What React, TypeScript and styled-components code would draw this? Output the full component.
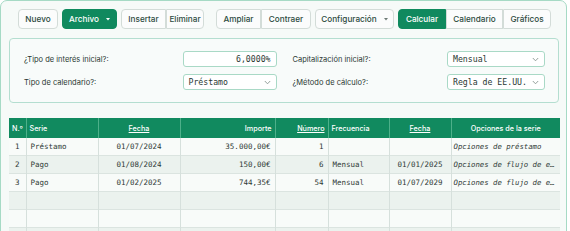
import React from "react";
import styled, { createGlobalStyle } from "styled-components";

const GlobalStyle = createGlobalStyle`
  html, body {
    margin: 0;
    padding: 0;
    background: #ffffff;
  }
  body {
    font-family: Inter, "Liberation Sans", sans-serif;
    color: #26352f;
  }
`;

const Panel = styled.div`
  width: 567px;
  height: 240px;
  box-sizing: border-box;
  border: 1px solid #a6dac5;
  border-radius: 7px;
  background: #f6faf8;
  padding: 8px 7px 0 8px;
  overflow: hidden;
`;

const Toolbar = styled.div`
  display: flex;
  align-items: center;
  gap: 4px;
  padding-left: 9px;
  height: 20px;
`;

const Group = styled.div<{ $after?: number }>`
  display: flex;
  margin-right: ${(p) => p.$after ?? 0}px;
`;

const Button = styled.button<{ $primary?: boolean; $w: number }>`
  height: 20px;
  width: ${(p) => p.$w}px;
  padding: 0;
  box-sizing: border-box;
  font-family: Inter, "Liberation Sans", sans-serif;
  font-size: 8.2px;
  font-weight: 500;
  border: 1px solid ${(p) => (p.$primary ? "#0f8a5e" : "#d3dcd8")};
  background: ${(p) => (p.$primary ? "#10895e" : "#fbfcfc")};
  color: ${(p) => (p.$primary ? "#ffffff" : "#2c4a3e")};
  border-radius: 4px;
  display: flex;
  align-items: center;
  justify-content: center;
  gap: 7px;

  ${Group} > & {
    border-radius: 0;
  }
  ${Group} > &:first-child {
    border-radius: 4px 0 0 4px;
  }
  ${Group} > &:last-child {
    border-radius: 0 4px 4px 0;
  }
  ${Group} > & + & {
    border-left-width: 0;
  }
`;

const Caret = ({ color }: { color: string }) => (
  <svg width="4" height="3" viewBox="0 0 4 3">
    <path d="M0 0 H4 L2 2.4 Z" fill={color} />
  </svg>
);

const Settings = styled.div`
  margin: 9px 0 0 0;
  border: 1px solid #b4ded0;
  border-radius: 4px;
  background: #f8fbfa;
  padding: 12px 13px 12px 14px;
  display: grid;
  grid-template-columns: 1fr 1fr;
  column-gap: 16px;
  row-gap: 7px;
`;

const Field = styled.div`
  display: flex;
  align-items: center;
  justify-content: space-between;
  height: 16px;
`;

const Label = styled.span`
  font-size: 7.5px;
  color: #2a3832;
`;

const Control = styled.div<{ $w: number; $align?: string }>`
  width: ${(p) => p.$w}px;
  height: 16px;
  box-sizing: border-box;
  border: 1px solid #a9d9c6;
  border-radius: 3px;
  background: #ffffff;
  display: flex;
  align-items: center;
  justify-content: ${(p) => (p.$align === "right" ? "flex-end" : "space-between")};
  padding: 0 5px 0 5px;
  font-family: "DejaVu Sans Mono", "Liberation Mono", monospace;
  font-size: 8.2px;
  color: #2a3832;
`;

const Chevron = () => (
  <svg width="7" height="5" viewBox="0 0 7 5" fill="none">
    <path d="M0.8 1 L3.5 3.8 L6.2 1" stroke="#8a9691" strokeWidth="0.9" />
  </svg>
);

const Table = styled.table`
  margin-top: 15px;
  width: 551px;
  border-collapse: collapse;
  table-layout: fixed;
`;

const Th = styled.th<{ $align?: string; $link?: boolean }>`
  height: 20px;
  padding: 0 3px;
  background: #118a5f;
  color: #ffffff;
  font-size: 7.2px;
  font-weight: 500;
  text-align: ${(p) => p.$align ?? "left"};
  text-decoration: ${(p) => (p.$link ? "underline" : "none")};
  border-left: 1px solid #4db08a;
  white-space: nowrap;
  &:first-child {
    border-left: none;
  }
`;

const Row = styled.tr<{ $even: boolean }>`
  background: ${(p) => (p.$even ? "#ebf2ee" : "#f8fbf9")};
  border-bottom: 1px solid #dbe4e0;
`;

const Td = styled.td<{ $align?: string; $italic?: boolean }>`
  height: 17px;
  padding: 0 ${(p) => (p.$italic ? 2 : 4)}px;
  font-family: "DejaVu Sans Mono", "Liberation Mono", monospace;
  font-size: ${(p) => (p.$italic ? 7.3 : 7.5)}px;
  color: #2f3a36;
  text-align: ${(p) => p.$align ?? "left"};
  font-style: ${(p) => (p.$italic ? "italic" : "normal")};
  border-left: 1px solid #d6e0dc;
  white-space: nowrap;
  overflow: hidden;
  text-overflow: ellipsis;
  &:first-child {
    border-left: none;
  }
`;

const cols = [17, 72, 82, 95, 53, 61, 62, 109];

const rows = [
  ["1", "Préstamo", "01/07/2024", "35.000,00€", "1", "", "", "Opciones de préstamo"],
  ["2", "Pago", "01/08/2024", "150,00€", "6", "Mensual", "01/01/2025", "Opciones de flujo de efectivo"],
  ["3", "Pago", "01/02/2025", "744,35€", "54", "Mensual", "01/07/2029", "Opciones de flujo de efectivo"],
  ["", "", "", "", "", "", "", ""],
  ["", "", "", "", "", "", "", ""],
  ["", "", "", "", "", "", "", ""],
];

const aligns = ["center", "left", "center", "right", "right", "left", "center", "left"];

export default function App() {
  return (
    <>
      <GlobalStyle />
      <Panel>
        <Toolbar>
          <Button $w={40}>Nuevo</Button>
          <Button $primary $w={55}>
            Archivo <Caret color="#ffffff" />
          </Button>
          <Group $after={8}>
            <Button $w={45}>Insertar</Button>
            <Button $w={38}>Eliminar</Button>
          </Group>
          <Group>
            <Button $w={45}>Ampliar</Button>
            <Button $w={50}>Contraer</Button>
          </Group>
          <Button $w={79}>
            Configuración <Caret color="#6d7a75" />
          </Button>
          <Group>
            <Button $primary $w={48}>Calcular</Button>
            <Button $w={57}>Calendario</Button>
            <Button $w={48}>Gráficos</Button>
          </Group>
        </Toolbar>

        <Settings>
          <Field>
            <Label>¿Tipo de interés inicial?:</Label>
            <Control $w={94} $align="right">6,0000%</Control>
          </Field>
          <Field>
            <Label>Capitalización inicial?:</Label>
            <Control $w={98}>
              Mensual <Chevron />
            </Control>
          </Field>
          <Field>
            <Label>Tipo de calendario?:</Label>
            <Control $w={94}>
              Préstamo <Chevron />
            </Control>
          </Field>
          <Field>
            <Label>¿Método de cálculo?:</Label>
            <Control $w={98}>
              Regla de EE.UU. <Chevron />
            </Control>
          </Field>
        </Settings>

        <Table>
          <colgroup>
            {cols.map((w, i) => (
              <col key={i} style={{ width: w }} />
            ))}
          </colgroup>
          <thead>
            <tr>
              <Th>N.º</Th>
              <Th>Serie</Th>
              <Th $align="center" $link>Fecha</Th>
              <Th $align="right">Importe</Th>
              <Th $align="right" $link>Número</Th>
              <Th>Frecuencia</Th>
              <Th $align="center" $link>Fecha</Th>
              <Th $align="center">Opciones de la serie</Th>
            </tr>
          </thead>
          <tbody>
            {rows.map((r, i) => (
              <Row key={i} $even={i % 2 === 1}>
                {r.map((c, j) => (
                  <Td key={j} $align={aligns[j]} $italic={j === 7}>
                    {c}
                  </Td>
                ))}
              </Row>
            ))}
          </tbody>
        </Table>
      </Panel>
    </>
  );
}
